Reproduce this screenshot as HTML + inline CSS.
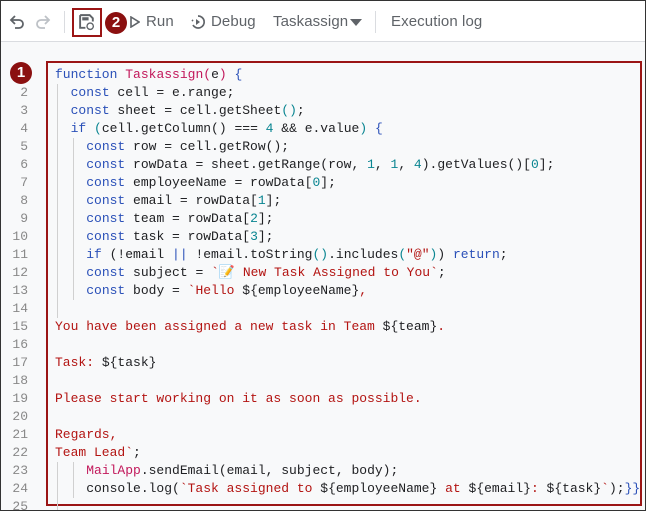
<!DOCTYPE html><html><head><style>
body{margin:0;width:646px;height:511px;overflow:hidden;background:#fff;font-family:"Liberation Sans",sans-serif;}
#f{position:absolute;left:0;top:0;width:644px;height:509px;border:1px solid #333;background:#f8f9fa;overflow:hidden}
#tb{position:absolute;left:0;top:0;width:644px;height:40px;background:#fff;border-bottom:1px solid #dadce0}
.t{position:absolute;top:12px;font-size:15px;color:#5f6368;letter-spacing:0.1px}
.sep{position:absolute;top:10px;width:1px;height:22px;background:#dadce0}
.badge{position:absolute;width:22px;height:22px;border-radius:50%;background:#8b1010;color:#fff;font-size:15px;font-weight:bold;text-align:center;line-height:22px}
#box{position:absolute;left:45px;top:60px;width:592px;height:441px;border:2px solid #9b1515}
.ln{position:absolute;left:0;width:27px;text-align:right;font:13px "Liberation Mono",monospace;color:#888;line-height:18px}
.c{position:absolute;left:54px;font:13px "Liberation Mono",monospace;color:#202124;line-height:18px;white-space:pre}
.k{color:#2a50b8}.fn{color:#c2185b}.s{color:#b31412}.n{color:#098591}.m{color:#c2185b}
.g{position:absolute;width:1px;background:#d0d0d0}
</style></head><body><div id="f">
<div id="tb">
<svg style="position:absolute;left:8px;top:13px" width="16" height="16" viewBox="0 0 16 16"><path d="M3 6h7a4 4 0 0 1 0 8H6" fill="none" stroke="#5f6368" stroke-width="1.8"/><path d="M6 2L2 6l4 4" fill="none" stroke="#5f6368" stroke-width="1.8"/></svg>
<svg style="position:absolute;left:34px;top:13px" width="16" height="16" viewBox="0 0 16 16"><path d="M13 6H6a4 4 0 0 0 0 8h4" fill="none" stroke="#bdc1c6" stroke-width="1.8"/><path d="M10 2l4 4-4 4" fill="none" stroke="#bdc1c6" stroke-width="1.8"/></svg>
<div class="sep" style="left:63px"></div>
<div style="position:absolute;left:71px;top:7px;width:30px;height:29px;border:2px solid #9b1515;box-sizing:border-box"></div>
<svg style="position:absolute;left:77px;top:12px" width="18" height="18" viewBox="0 0 17 17"><path d="M2 2h9l3 3v3M2 2v12h5" fill="none" stroke="#5f6368" stroke-width="1.8"/><rect x="4" y="4" width="6" height="3" fill="#5f6368"/><circle cx="11.5" cy="12.5" r="3" fill="none" stroke="#5f6368" stroke-width="1.3"/></svg>
<div class="badge" style="left:104px;top:11px">2</div>
<svg style="position:absolute;left:129px;top:15px" width="10" height="12" viewBox="0 0 10 12"><path d="M1 1l8 5-8 5z" fill="none" stroke="#5f6368" stroke-width="1.6"/></svg>
<div class="t" style="left:145px">Run</div>
<svg style="position:absolute;left:189px;top:13px" width="16" height="16" viewBox="0 0 16 16"><path d="M8 2a6 6 0 1 1-5 9" fill="none" stroke="#5f6368" stroke-width="1.7"/><path d="M6 5l4 3-4 3z" fill="#5f6368"/><path d="M2 6l1 1" stroke="#5f6368" stroke-width="1.7"/></svg>
<div class="t" style="left:210px">Debug</div>
<div class="t" style="left:272px">Taskassign</div>
<svg style="position:absolute;left:349px;top:18px" width="12" height="7"><path d="M0 0h12L6 7z" fill="#5f6368"/></svg>
<div class="sep" style="left:374px"></div>
<div class="t" style="left:390px">Execution log</div>
</div>
<div class="badge" style="left:9px;top:61px">1</div>
<div id="box"></div>
<div class="g" style="left:56px;top:83px;height:234px"></div>
<div class="g" style="left:72px;top:137px;height:162px"></div>
<div class="g" style="left:56px;top:461px;height:50px"></div>
<div class="g" style="left:72px;top:461px;height:36px"></div>
<div class="c" style="top:65px"><span class="k">function</span> <span class="fn">Taskassign</span><span class="fn">(</span>e<span class="fn">)</span> <span class="k">{</span></div>
<div class="c" style="top:83px">  <span class="k">const</span> cell = e.range;</div>
<div class="c" style="top:101px">  <span class="k">const</span> sheet = cell.getSheet<span class="n">()</span>;</div>
<div class="c" style="top:119px">  <span class="k">if</span> <span class="n">(</span>cell.getColumn() === <span class="n">4</span> &amp;&amp; e.value<span class="n">)</span> <span class="k">{</span></div>
<div class="c" style="top:137px">    <span class="k">const</span> row = cell.getRow();</div>
<div class="c" style="top:155px">    <span class="k">const</span> rowData = sheet.getRange(row, <span class="n">1</span>, <span class="n">1</span>, <span class="n">4</span>).getValues()[<span class="n">0</span>];</div>
<div class="c" style="top:173px">    <span class="k">const</span> employeeName = rowData[<span class="n">0</span>];</div>
<div class="c" style="top:191px">    <span class="k">const</span> email = rowData[<span class="n">1</span>];</div>
<div class="c" style="top:209px">    <span class="k">const</span> team = rowData[<span class="n">2</span>];</div>
<div class="c" style="top:227px">    <span class="k">const</span> task = rowData[<span class="n">3</span>];</div>
<div class="c" style="top:245px">    <span class="k">if</span> (!email <span class="k">||</span> !email.toString<span class="n">()</span>.includes<span class="n">(</span><span class="s">"@"</span><span class="n">)</span>) <span class="k">return</span>;</div>
<div class="c" style="top:263px">    <span class="k">const</span> subject = <span class="s">`📝 New Task Assigned to You`</span>;</div>
<div class="c" style="top:281px">    <span class="k">const</span> body = <span class="s">`Hello </span>${employeeName}<span class="s">,</span></div>
<div class="c s" style="top:317px">You have been assigned a new task in Team <span style="color:#202124">${team}</span>.</div>
<div class="c s" style="top:353px">Task: <span style="color:#202124">${task}</span></div>
<div class="c s" style="top:389px">Please start working on it as soon as possible.</div>
<div class="c s" style="top:425px">Regards,</div>
<div class="c s" style="top:443px">Team Lead`<span style="color:#202124">;</span></div>
<div class="c" style="top:461px">    <span class="m">MailApp</span>.sendEmail(email, subject, body);</div>
<div class="c" style="top:479px">    console.log(<span class="s">`Task assigned to </span>${employeeName}<span class="s"> at </span>${email}<span class="s">: </span>${task}<span class="s">`</span>);<span class="k">}}</span></div>
<div class="ln" style="top:83px">2</div><div class="ln" style="top:101px">3</div><div class="ln" style="top:119px">4</div><div class="ln" style="top:137px">5</div><div class="ln" style="top:155px">6</div><div class="ln" style="top:173px">7</div><div class="ln" style="top:191px">8</div><div class="ln" style="top:209px">9</div><div class="ln" style="top:227px">10</div><div class="ln" style="top:245px">11</div><div class="ln" style="top:263px">12</div><div class="ln" style="top:281px">13</div><div class="ln" style="top:299px">14</div><div class="ln" style="top:317px">15</div><div class="ln" style="top:335px">16</div><div class="ln" style="top:353px">17</div><div class="ln" style="top:371px">18</div><div class="ln" style="top:389px">19</div><div class="ln" style="top:407px">20</div><div class="ln" style="top:425px">21</div><div class="ln" style="top:443px">22</div><div class="ln" style="top:461px">23</div><div class="ln" style="top:479px">24</div><div class="ln" style="top:497px">25</div>
</div></body></html>
